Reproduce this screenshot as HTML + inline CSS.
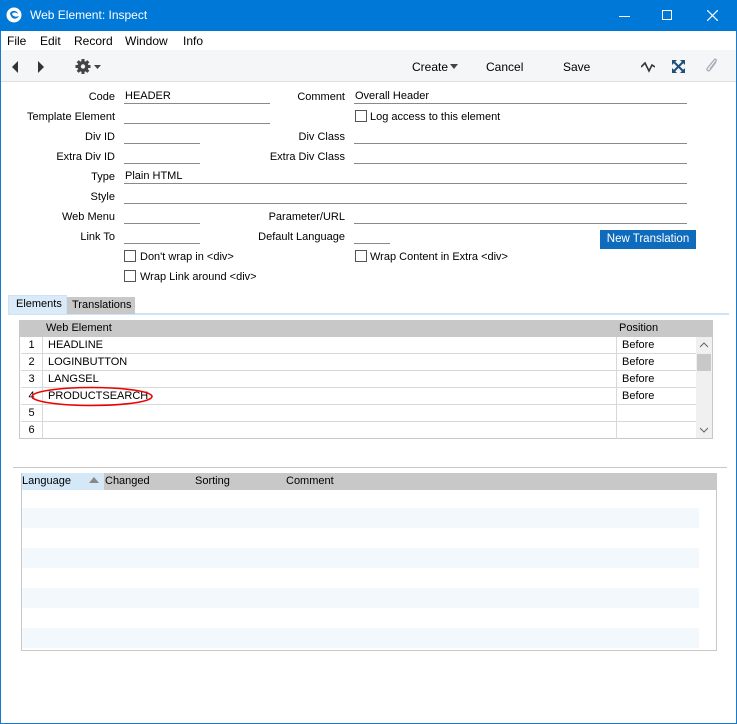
<!DOCTYPE html>
<html><head><meta charset="utf-8"><style>
*{box-sizing:border-box;margin:0;padding:0}
body{width:737px;height:724px;position:relative;background:#fff;font-family:"Liberation Sans",sans-serif;font-size:11px;color:#000;overflow:hidden}
.a{position:absolute;white-space:nowrap}
.lbl{position:absolute;text-align:right;white-space:nowrap;line-height:14px}
.f{position:absolute;border-bottom:1px solid #8a8a8a;height:14px;line-height:13px;padding-left:1px}
.cb{position:absolute;width:12px;height:12px;border:1px solid #555;background:#fff}
.ct{position:absolute;white-space:nowrap;line-height:14px}
.row{position:absolute;left:21px;width:675px;height:17px;border-bottom:1px solid #d8d8d8;line-height:16px}
.row .n{position:absolute;left:0;width:22px;text-align:center;border-right:1px solid #d8d8d8;height:17px}
.row .w{position:absolute;left:27px}
.row .p{position:absolute;left:595px;border-left:1px solid #d8d8d8;height:17px;padding-left:5px;width:80px}
</style></head><body>
<div class="a" style="left:0;top:0;width:737px;height:724px;border:1px solid #1979ca"></div>
<!-- title bar -->
<div class="a" style="left:0;top:0;width:737px;height:31px;background:#0078d7"></div>
<svg class="a" style="left:6px;top:7px" width="16" height="16" viewBox="0 0 16 16"><circle cx="8" cy="8" r="7.5" fill="#fff"/><path d="M4 6c2-3 7-3 8 1c-2-2-5-2-6 0c1 3 5 3 7 2c-2 4-8 4-9-3z" fill="#0078d7"/></svg>
<div class="a" style="left:30px;top:8px;color:#fff;font-size:12px">Web Element: Inspect</div>
<div class="a" style="left:619px;top:16px;width:11px;height:1px;background:#fff"></div>
<div class="a" style="left:662px;top:10px;width:10px;height:10px;border:1px solid #fff"></div>
<svg class="a" style="left:707px;top:10px" width="11" height="11"><path d="M0 0L11 11M11 0L0 11" stroke="#fff" stroke-width="1.2"/></svg>
<!-- menu -->
<div class="a" style="left:7px;top:34px;font-size:12px">File</div>
<div class="a" style="left:40px;top:34px;font-size:12px">Edit</div>
<div class="a" style="left:74px;top:34px;font-size:12px">Record</div>
<div class="a" style="left:125px;top:34px;font-size:12px">Window</div>
<div class="a" style="left:183px;top:34px;font-size:12px">Info</div>
<!-- toolbar -->
<div class="a" style="left:1px;top:50px;width:735px;height:32px;background:#f5f6f7;border-bottom:1px solid #e0e0e0"></div>
<svg class="a" style="left:10px;top:60px" width="40" height="14"><path d="M8 1L2 7L8 13z" fill="#333"/><path d="M28 1L34 7L28 13z" fill="#333"/></svg>
<svg class="a" style="left:75px;top:58px" width="30" height="17" viewBox="0 0 30 17"><g fill="#444"><circle cx="8" cy="8.5" r="5.5"/><rect x="6.5" y="1" width="3" height="15"/><rect x="0.5" y="7" width="15" height="3"/><rect x="6.5" y="1" width="3" height="15" transform="rotate(45 8 8.5)"/><rect x="6.5" y="1" width="3" height="15" transform="rotate(-45 8 8.5)"/></g><circle cx="8" cy="8.5" r="2.2" fill="#f5f6f7"/><path d="M19 7h7l-3.5 4z" fill="#444"/></svg>
<div class="a" style="left:412px;top:60px;font-size:12px">Create</div>
<svg class="a" style="left:450px;top:64px" width="8" height="5"><path d="M0 0h8L4 5z" fill="#444"/></svg>
<div class="a" style="left:486px;top:60px;font-size:12px">Cancel</div>
<div class="a" style="left:563px;top:60px;font-size:12px">Save</div>
<svg class="a" style="left:641px;top:61px" width="14" height="12"><path d="M0 6L4 2L8 10L11 4L14 6" stroke="#333" stroke-width="1.6" fill="none"/></svg>
<svg class="a" style="left:672px;top:60px" width="13" height="13"><g fill="#1f4e79"><path d="M0 0h5L0 5z"/><path d="M13 0h-5L13 5z"/><path d="M0 13h5L0 8z"/><path d="M13 13h-5L13 8z"/></g><path d="M2 2L11 11M11 2L2 11" stroke="#1f4e79" stroke-width="2"/></svg>
<svg class="a" style="left:705px;top:58px" width="14" height="17"><path d="M11 4L5 12c-1.5 2-4 0-2.5-2L9 2c1-1.5 3-0.5 2 1L5 11" stroke="#aab" stroke-width="1.3" fill="none"/></svg>
<!-- form -->
<div class="lbl" style="right:622px;top:90px">Code</div>
<div class="f" style="left:124px;top:90px;width:146px">HEADER</div>
<div class="lbl" style="right:392px;top:90px">Comment</div>
<div class="f" style="left:354px;top:90px;width:333px">Overall Header</div>
<div class="lbl" style="right:622px;top:110px">Template Element</div>
<div class="f" style="left:124px;top:110px;width:146px"></div>
<div class="cb" style="left:355px;top:110px"></div><div class="ct" style="left:370px;top:110px">Log access to this element</div>
<div class="lbl" style="right:622px;top:130px">Div ID</div>
<div class="f" style="left:124px;top:130px;width:76px"></div>
<div class="lbl" style="right:392px;top:130px">Div Class</div>
<div class="f" style="left:354px;top:130px;width:333px"></div>
<div class="lbl" style="right:622px;top:150px">Extra Div ID</div>
<div class="f" style="left:124px;top:150px;width:76px"></div>
<div class="lbl" style="right:392px;top:150px">Extra Div Class</div>
<div class="f" style="left:354px;top:150px;width:333px"></div>
<div class="lbl" style="right:622px;top:170px">Type</div>
<div class="f" style="left:124px;top:170px;width:563px">Plain HTML</div>
<div class="lbl" style="right:622px;top:190px">Style</div>
<div class="f" style="left:124px;top:190px;width:563px"></div>
<div class="lbl" style="right:622px;top:210px">Web Menu</div>
<div class="f" style="left:124px;top:210px;width:76px"></div>
<div class="lbl" style="right:392px;top:210px">Parameter/URL</div>
<div class="f" style="left:354px;top:210px;width:333px"></div>
<div class="lbl" style="right:622px;top:230px">Link To</div>
<div class="f" style="left:124px;top:230px;width:76px"></div>
<div class="lbl" style="right:392px;top:230px">Default Language</div>
<div class="f" style="left:354px;top:230px;width:36px"></div>
<div class="a" style="left:600px;top:230px;width:96px;height:19px;background:#0f6cbd;color:#fff;text-align:center;line-height:18px;font-size:11.5px">New Translation</div>
<div class="cb" style="left:124px;top:250px"></div><div class="ct" style="left:140px;top:250px">Don't wrap in &lt;div&gt;</div>
<div class="cb" style="left:355px;top:250px"></div><div class="ct" style="left:370px;top:250px">Wrap Content in Extra &lt;div&gt;</div>
<div class="cb" style="left:124px;top:270px"></div><div class="ct" style="left:140px;top:270px">Wrap Link around &lt;div&gt;</div>
<!-- tabs -->
<div class="a" style="left:8px;top:313px;width:721px;height:2px;background:#cfe3f7"></div>
<div class="a" style="left:8px;top:295px;width:59px;height:19px;background:#dbeaf8;border:1px solid #cfe3f7;border-bottom:none;padding:2px 0 0 7px">Elements</div>
<div class="a" style="left:67px;top:297px;width:68px;height:17px;background:#c8c8c8;padding:2px 0 0 5px">Translations</div>
<!-- elements table -->
<div class="a" style="left:19px;top:320px;width:694px;height:119px;border:1px solid #c8c8c8;background:#fff"></div>
<div class="a" style="left:20px;top:320px;width:692px;height:17px;background:#c8c8c8"></div>
<div class="a" style="left:46px;top:322px">Web Element</div>
<div class="a" style="left:619px;top:322px">Position</div>
<div class="row" style="top:337px"><div class="n">1</div><div class="w">HEADLINE</div><div class="p">Before</div></div>
<div class="row" style="top:354px"><div class="n">2</div><div class="w">LOGINBUTTON</div><div class="p">Before</div></div>
<div class="row" style="top:371px"><div class="n">3</div><div class="w">LANGSEL</div><div class="p">Before</div></div>
<div class="row" style="top:388px"><div class="n">4</div><div class="w">PRODUCTSEARCH</div><div class="p">Before</div></div>
<div class="row" style="top:405px"><div class="n">5</div><div class="p"></div></div>
<div class="row" style="top:422px;border-bottom:none"><div class="n">6</div><div class="p"></div></div>
<div class="a" style="left:696px;top:337px;width:16px;height:101px;background:#f0f0f0"></div>
<div class="a" style="left:697px;top:354px;width:14px;height:17px;background:#c8c8c8"></div>
<svg class="a" style="left:699px;top:342px" width="10" height="6"><path d="M1 5L5 1L9 5" stroke="#666" fill="none"/></svg>
<svg class="a" style="left:699px;top:427px" width="10" height="6"><path d="M1 1L5 5L9 1" stroke="#666" fill="none"/></svg>
<svg class="a" style="left:30px;top:385px" width="126" height="23"><ellipse cx="62" cy="11.5" rx="60" ry="9" stroke="#e00" stroke-width="1.6" fill="none"/></svg>
<!-- divider -->
<div class="a" style="left:13px;top:467px;width:714px;height:1px;background:#c8c8c8"></div>
<!-- translations table -->
<div class="a" style="left:21px;top:473px;width:696px;height:178px;border:1px solid #c8c8c8;background:#fff"></div>
<div class="a" style="left:22px;top:473px;width:694px;height:17px;background:#c8c8c8"></div>
<div class="a" style="left:22px;top:473px;width:82px;height:17px;background:#d5e8f8"></div>
<div class="a" style="left:22px;top:475px">Language</div>
<svg class="a" style="left:89px;top:477px" width="10" height="6"><path d="M0 6L5 0L10 6z" fill="#888"/></svg>
<div class="a" style="left:105px;top:475px">Changed</div>
<div class="a" style="left:195px;top:475px">Sorting</div>
<div class="a" style="left:286px;top:475px">Comment</div>
<div class="a" style="left:22px;top:508px;width:677px;height:20px;background:#f3f8fd"></div>
<div class="a" style="left:22px;top:548px;width:677px;height:20px;background:#f3f8fd"></div>
<div class="a" style="left:22px;top:588px;width:677px;height:20px;background:#f3f8fd"></div>
<div class="a" style="left:22px;top:628px;width:677px;height:20px;background:#f3f8fd"></div>
</body></html>
